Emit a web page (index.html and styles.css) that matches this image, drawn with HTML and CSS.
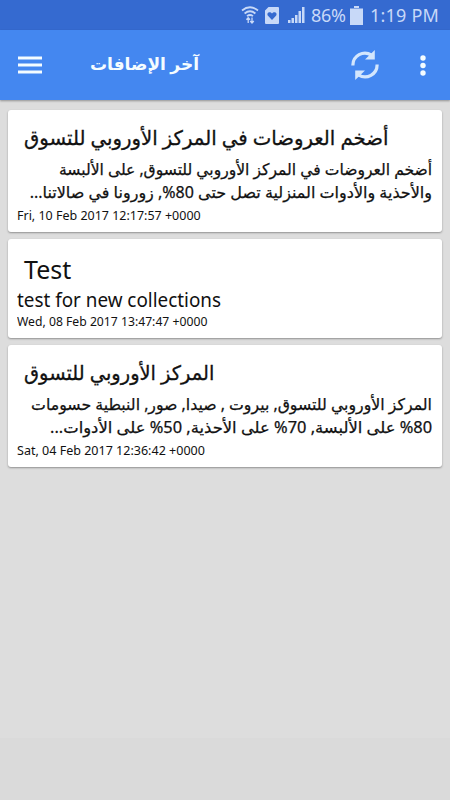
FILE: index.html
```
<!DOCTYPE html>
<html lang="ar">
<head>
<meta charset="utf-8">
<meta name="viewport" content="width=device-width, initial-scale=1">
<title>آخر الإضافات</title>
<link rel="stylesheet" href="styles.css">
</head>
<body>
<div class="status">
  <svg class="wifi" width="18" height="18" viewBox="0 0 18 18" fill="none" stroke="currentColor" stroke-width="1.7"><path d="M1 4.5Q9-2 17 4.5M3.6 7.5Q9 3 14.4 7.5M6 10.2Q9 7.800 12 10.200"/><path d="M7.200 17v-5M5.400 13.700l1.800-2 1.800 2M11 11.500v5M9.200 15l1.800 2 1.800-2" stroke-width="1.300"/></svg>
  <svg class="health" width="14" height="17" viewBox="0 0 14 17"><path fill="currentColor" fill-rule="evenodd" d="M3.500 0H13q1 0 1 1v15q0 1-1 1H1q-1 0-1-1V3.500zM7 13l4-4.200C13 5.800 9 3.700 7 6.500 5 3.700 1 5.800 3 8.800z"/></svg>
  <svg class="signal" width="17" height="16" viewBox="0 0 17 16" fill="currentColor"><path d="M0 13h2.500v3H0zM3.500 11H6v5H3.500zM7 8h2.500v8H7zM10.500 4H13v12h-2.500zM14 0h2.500v16H14z"/></svg>
  <span class="percent">86%</span>
  <svg class="battery" width="13" height="19" viewBox="0 0 13 19" fill="currentColor"><path d="M4 0h5v2H4zM0 3h13v16H0z"/><path d="M0 2h13v1H0z" opacity=".5"/></svg>
  <span class="clock">1:19 PM</span>
</div>
<header class="toolbar">
  <svg class="menu" width="24" height="18" viewBox="0 0 24 18" fill="currentColor"><path d="M0 .5h24v3H0zM0 7.500h24v3H0zM0 14.500h24v3H0z"/></svg>
  <h1 class="heading" dir="rtl">آخر الإضافات</h1>
  <svg class="refresh" width="28" height="30" viewBox="0 0 28 30"><path d="M1.900 15.500A12 12 0 0 1 20.500 5.200M26.100 14.500A12 12 0 0 1 7.500 24.800" fill="none" stroke="currentColor" stroke-width="3.200"/><path d="M23.800 0v9.500H14zM4.200 30v-9.500H14z" fill="currentColor"/></svg>
  <svg class="more" width="6" height="21" viewBox="0 0 6 21" fill="currentColor"><circle cx="3" cy="3" r="2.700"/><circle cx="3" cy="10.500" r="2.700"/><circle cx="3" cy="18" r="2.700"/></svg>
</header>
<main class="feed">
  <article class="card card-first">
    <h2 class="title"><span class="fit t1" dir="rtl">أضخم العروضات في المركز الأوروبي للتسوق</span></h2>
    <div class="body" dir="rtl">
      <div class="line"><span class="fit b1">أضخم العروضات في المركز الأوروبي للتسوق, على الألبسة</span></div>
      <div class="line"><span class="fit b2">والأحذية والأدوات المنزلية تصل حتى 80%, زورونا في صالاتنا...</span></div>
    </div>
    <div class="date"><span class="fit d1">Fri, 10 Feb 2017 12:17:57 +0000</span></div>
  </article>
  <article class="card card-second">
    <h2 class="title latin"><span class="fit t2">Test</span></h2>
    <div class="summary"><span class="fit s2">test for new collections</span></div>
    <div class="date"><span class="fit d2">Wed, 08 Feb 2017 13:47:47 +0000</span></div>
  </article>
  <article class="card card-third">
    <h2 class="title"><span class="fit t3" dir="rtl">المركز الأوروبي للتسوق</span></h2>
    <div class="body" dir="rtl">
      <div class="line"><span class="fit b3">المركز الأوروبي للتسوق, بيروت , صيدا, صور, النبطية حسومات</span></div>
      <div class="line"><span class="fit b4">80&rlm;% على الألبسة, 70% على الأحذية, 50% على الأدوات...</span></div>
    </div>
    <div class="date"><span class="fit d3">Sat, 04 Feb 2017 12:36:42 +0000</span></div>
  </article>
</main>
</body>
</html>
```
FILE: styles.css
```
* { box-sizing: border-box; }
body {
  margin: 0;
  height: 800px;
  overflow: hidden;
  display: flex;
  flex-direction: column;
  background: linear-gradient(#ddd 738px, #dadada 738px);
  color: #111;
  font-family: "Noto Sans", "DejaVu Sans", sans-serif;
}
svg { display: block; flex: none; }
.status {
  height: 30px;
  flex: none;
  display: flex;
  align-items: center;
  padding-left: 241px;
  background: #356ad0;
  color: #c8d9f8;
  font-size: 18px;
  line-height: 30px;
  white-space: nowrap;
}
.health { margin-left: 6px; }
.signal { margin-left: 9px; }
.percent { width: 36px; margin-left: 6px; letter-spacing: -.3px; }
.battery { margin-left: 3px; }
.clock { margin-left: 7px; letter-spacing: .2px; }
.toolbar {
  height: 70px;
  flex: none;
  display: flex;
  align-items: center;
  padding: 0 24px 0 18px;
  background: #4487f0;
  color: #f4fcff;
  box-shadow: 0 1px 2px rgba(0, 0, 0, .35);
}
.heading {
  margin: -3px auto 0 48px;
  font-size: 17px;
  font-weight: 700;
  line-height: 30px;
}
.refresh { color: #d3e6fd; margin-right: 41px; }
.feed {
  display: flex;
  flex-direction: column;
  gap: 7px;
  padding: 10px 8px;
}
.card {
  padding: 0 10px 0 9px;
  border-radius: 3px;
  background: #fff;
  box-shadow: 0 1px 2px rgba(0, 0, 0, .35);
}
.card-first { height: 122px; }
.card-second { height: 99px; }
.card-third { height: 122px; }
.fit { display: inline-block; white-space: nowrap; transform-origin: left center; }
.body .fit { transform-origin: right center; }
.t1 { transform: scaleX(.984); }
.t3 { transform: scaleX(.972); }
.b1 { transform: scaleX(.974); }
.b3 { transform: scaleX(.985); }
.b4 { transform: scaleX(1.024); }
.s2 { transform: scaleX(.992); }
.d1 { transform: scaleX(1.04); }
.d2 { transform: scaleX(1.016); }
.d3 { transform: scaleX(1.044); }
.title {
  margin: 0;
  padding: 14px 0 0 7px;
  height: 48px;
  font-size: 20px;
  font-weight: 400;
  line-height: 28px;
  -webkit-text-stroke: .3px currentColor;
}
.latin { font-size: 25px; padding-top: 16px; height: 49px; -webkit-text-stroke: 0; }
.body { height: 49px; font-size: 16px; -webkit-text-stroke: .25px currentColor; }
.line { height: 23px; line-height: 23px; }
.summary { height: 25px; font-size: 19px; line-height: 25px; }
.date { font-size: 12px; line-height: 18px; }
```
